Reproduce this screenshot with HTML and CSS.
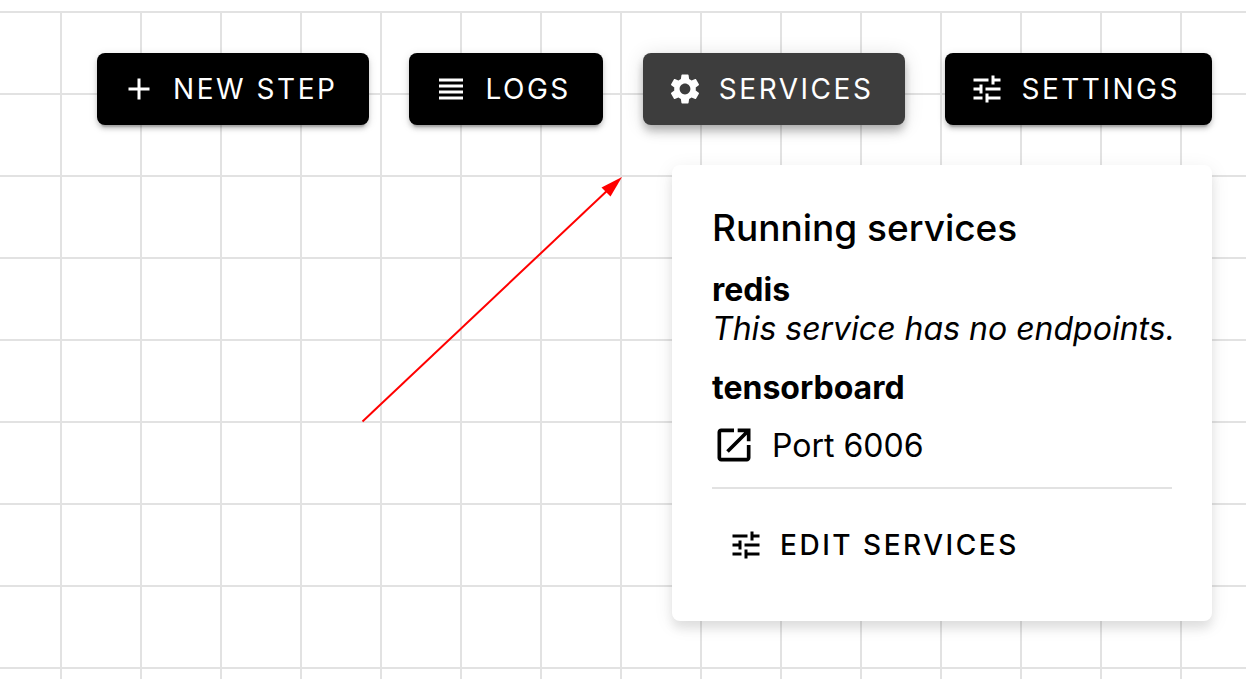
FILE: index.html
```html
<!DOCTYPE html>
<html lang="en">
<head>
<meta charset="utf-8">
<title>Pipeline services</title>
<link rel="stylesheet" href="styles.css">
</head>
<body>
<svg class="symbols" aria-hidden="true">
  <symbol id="tune" viewBox="0 0 24 24"><path d="M3 17v2h6v-2H3zM3 5v2h10V5H3zm10 16v-2h8v-2h-8v-2h-2v6h2zM7 9v2H3v2h4v2h2V9H7zm14 4v-2H11v2h10zm-6-4h2V7h4V5h-4V3h-2v6z"/></symbol>
</svg>
<main class="canvas">
  <svg class="arrow" viewBox="0 0 262 246" aria-hidden="true">
    <path d="M2.500 244.500 250 11" stroke="red" stroke-width="2" fill="none"/>
    <path d="M262 0 241.500 10.500 250.500 19.500z" fill="red"/>
  </svg>
  <div class="toolbar">
    <button class="button" type="button">
      <svg class="icon" viewBox="0 0 24 24" aria-hidden="true"><path d="M19 13h-6v6h-2v-6H5v-2h6V5h2v6h6v2z"/></svg>
      <span>NEW STEP</span>
    </button>
    <button class="button" type="button">
      <svg class="icon" viewBox="0 0 24 24" aria-hidden="true"><path d="M4 15h16v-2H4v2zm0 4h16v-2H4v2zm0-8h16V9H4v2zm0-6v2h16V5H4z"/></svg>
      <span>LOGS</span>
    </button>
    <button class="button button-active" type="button" aria-expanded="true">
      <svg class="icon" viewBox="0 0 24 24" aria-hidden="true"><path d="M19.14 12.94c.04-.3.06-.61.06-.94 0-.32-.02-.64-.07-.94l2.030-1.580c.18-.14.23-.41.12-.61l-1.920-3.320c-.12-.22-.37-.29-.59-.22l-2.390.96c-.5-.38-1.030-.7-1.620-.94l-.36-2.540c-.04-.24-.24-.41-.48-.41h-3.840c-.24 0-.43.17-.47.41l-.36 2.540c-.59.24-1.130.57-1.620.94l-2.390-.96c-.22-.08-.47 0-.59.22L2.740 8.870c-.12.21-.08.47.12.61l2.030 1.580c-.05.3-.09.63-.09.94s.02.64.07.94l-2.030 1.580c-.18.14-.23.41-.12.61l1.920 3.320c.12.22.37.29.59.22l2.390-.96c.5.38 1.030.7 1.620.94l.36 2.540c.05.24.24.41.48.41h3.840c.24 0 .44-.17.47-.41l.36-2.540c.59-.24 1.130-.56 1.620-.94l2.390.96c.22.08.47 0 .59-.22l1.920-3.320c.12-.22.07-.47-.12-.61l-2.010-1.580zM12 15.600c-1.980 0-3.600-1.620-3.600-3.600s1.620-3.600 3.600-3.600 3.600 1.620 3.600 3.600-1.620 3.600-3.600 3.600z"/></svg>
      <span>SERVICES</span>
    </button>
    <button class="button" type="button">
      <svg class="icon" aria-hidden="true"><use href="#tune"/></svg>
      <span>SETTINGS</span>
    </button>
  </div>
  <section class="panel">
    <h1 class="title">Running services</h1>
    <div class="service">
      <h2 class="service-name">redis</h2>
      <p class="note">This service has no endpoints.</p>
    </div>
    <div class="service">
      <h2 class="service-name">tensorboard</h2>
      <a class="endpoint" href="#port-6006">
        <svg class="endpoint-icon" viewBox="0 0 24 24" aria-hidden="true"><path d="M19 19H5V5h7V3H5c-1.110 0-2 .9-2 2v14c0 1.100.89 2 2 2h14c1.100 0 2-.9 2-2v-7h-2v7zM14 3v2h3.590l-9.830 9.830 1.410 1.410L19 6.410V10h2V3h-7z"/></svg>
        <span>Port 6006</span>
      </a>
    </div>
    <div class="actions">
      <button class="button button-text" type="button">
        <svg class="icon" aria-hidden="true"><use href="#tune"/></svg>
        <span>EDIT SERVICES</span>
      </button>
    </div>
  </section>
</main>
</body>
</html>
```
FILE: styles.css
```css
* {
  box-sizing: border-box;
}

body {
  margin: 0;
  font-family: Inter, "Liberation Sans", sans-serif;
  color: #000;
  background: #fff;
}

h1, h2, p {
  margin: 0;
}

.symbols {
  position: absolute;
  width: 0;
  height: 0;
}

.canvas {
  position: relative;
  display: flex;
  flex-direction: column;
  align-items: flex-end;
  gap: 40px;
  min-height: 100vh;
  padding: 53px 34px 40px;
  overflow: hidden;
  background-image:
    linear-gradient(#fff 11px, transparent 11px),
    linear-gradient(#e2e2e2 2px, transparent 2px),
    linear-gradient(90deg, #e2e2e2 2px, transparent 2px);
  background-size: 100% 100%, 80px 82px, 80px 80px;
  background-position: 0 0, 0 11px, 60px 0;
}

.arrow {
  position: absolute;
  left: 360px;
  top: 177px;
  width: 262px;
  height: 246px;
}

.toolbar {
  display: flex;
  gap: 40px;
}

.button {
  display: flex;
  align-items: center;
  gap: 16px;
  height: 72px;
  padding: 0 32px 0 24px;
  border: 0;
  border-radius: 8px;
  color: #fff;
  background: #000;
  font: 400 28px/72px Inter, "Liberation Sans", sans-serif;
  letter-spacing: 0.09em;
  white-space: nowrap;
  box-shadow: 0 6px 2px -4px rgba(0, 0, 0, 0.2), 0 4px 4px rgba(0, 0, 0, 0.14), 0 2px 10px rgba(0, 0, 0, 0.12);
}

.button-active {
  background: #3d3d3d;
  box-shadow: 0 4px 8px -2px rgba(0, 0, 0, 0.2), 0 8px 10px rgba(0, 0, 0, 0.14), 0 2px 20px rgba(0, 0, 0, 0.12);
}

.button-text {
  padding: 0 16px;
  color: #000;
  background: transparent;
  font-weight: 500;
  box-shadow: none;
}

.icon {
  flex: none;
  width: 36px;
  height: 36px;
  fill: currentColor;
}

.panel {
  display: flex;
  flex-direction: column;
  gap: 20px;
  width: 540px;
  padding: 40px;
  border-radius: 8px;
  background: #fff;
  box-shadow: 0 4px 20px rgba(0, 0, 0, 0.08), 0 8px 10px rgba(0, 0, 0, 0.08);
}

.title {
  font-size: 37px;
  font-weight: 500;
  line-height: 45px;
}

.service {
  font-size: 32px;
  line-height: 39px;
}

.service-name {
  font-size: 32px;
  font-weight: 700;
}

.note {
  font-weight: 400;
  font-style: italic;
  white-space: nowrap;
}

.endpoint {
  display: flex;
  align-items: center;
  gap: 16px;
  height: 76px;
  color: #000;
  font-weight: 400;
  text-decoration: none;
}

.endpoint-icon {
  width: 44px;
  height: 44px;
}

.actions {
  margin-top: -16px;
  padding-top: 20px;
  border-top: 2px solid #e2e2e2;
}
```
